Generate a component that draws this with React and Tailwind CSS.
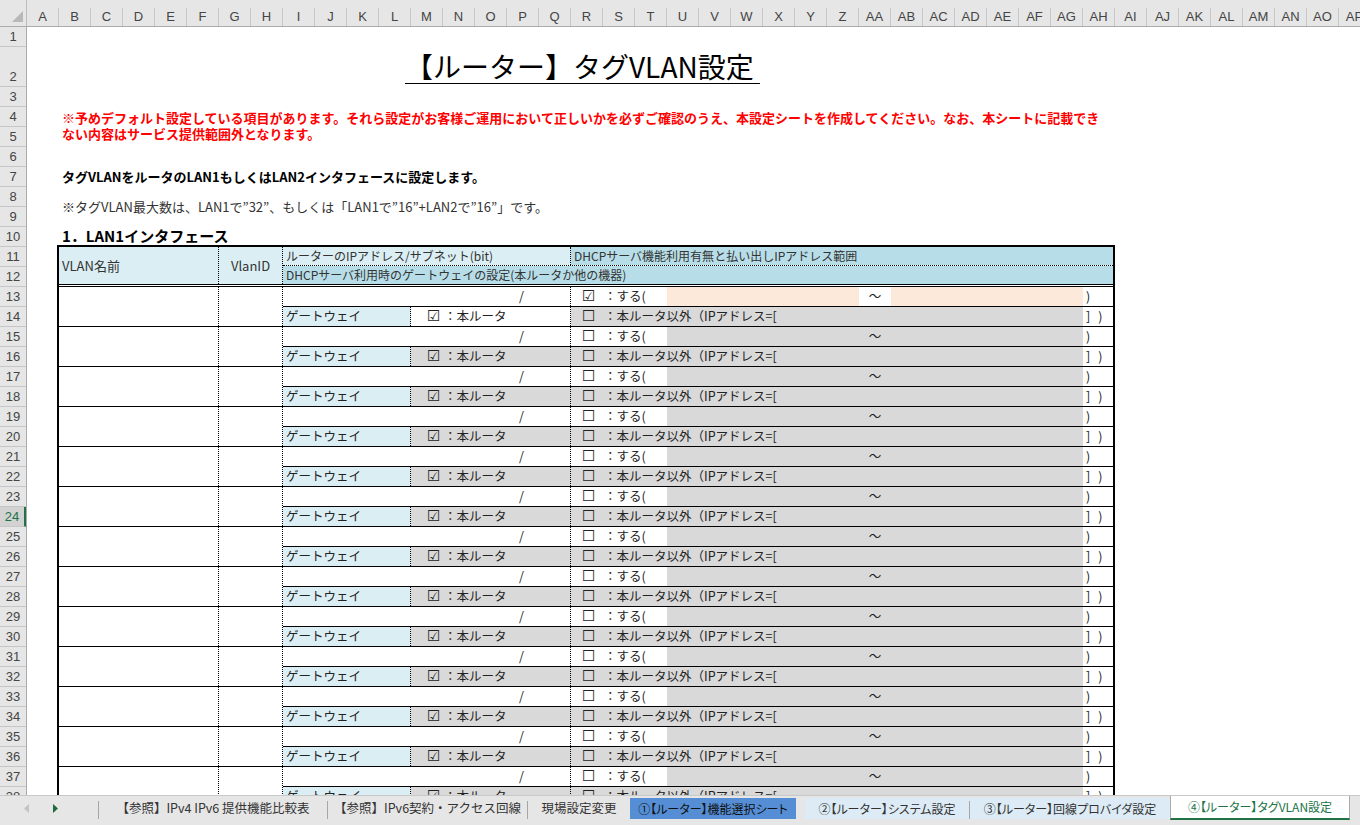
import React from 'react';

const jp = "font-['Noto_Sans_CJK_JP',sans-serif]";
const lat = "font-['Liberation_Sans','Noto_Sans_CJK_JP',sans-serif]";

const colName = (i) => {
  let s = '';
  let n = i + 1;
  while (n > 0) {
    const m = (n - 1) % 26;
    s = String.fromCharCode(65 + m) + s;
    n = Math.floor((n - 1) / 26);
  }
  return s;
};

const columns = Array.from({ length: 42 }, (_, i) => colName(i));
const rowNums = Array.from({ length: 38 }, (_, i) => i + 1);
const pairs = Array.from({ length: 13 }, (_, i) => i);

const Box = ({ checked, w = 'w-[22px]' }) => (
  <span className={`${w} shrink-0 font-['DejaVu_Sans',sans-serif] text-[15px] leading-none text-[#222]`}>
    {checked ? '☑' : '☐'}
  </span>
);

function Pair({ first }) {
  return (
    <div className="flex h-[40px] border-b border-black">
      <div className="w-[160px] border-r border-dotted border-black" />
      <div className="w-[64px] border-r border-dotted border-black" />
      <div className="flex-1 flex flex-col">
        <div className="h-[20px] flex border-b border-black">
          <div className="w-[288px] border-r border-dotted border-black flex items-center justify-end pr-[46px]">/</div>
          <div className="w-[96px] flex items-center pl-[11px]">
            <Box checked={first} />
            <span>：する(</span>
          </div>
          {first ? (
            <>
              <div className="w-[192px] bg-[#fde9d9]" />
              <div className="w-[32px] flex items-center justify-center">〜</div>
              <div className="w-[192px] bg-[#fde9d9]" />
            </>
          ) : (
            <div className="w-[416px] bg-[#d9d9d9] flex items-center justify-center">〜</div>
          )}
          <div className="flex-1 flex items-center pl-[3px]">)</div>
        </div>
        <div className="flex-1 flex">
          <div className="w-[128px] bg-[#daeef3] border-r border-dotted border-black flex items-center pl-[3px]">ゲートウェイ</div>
          <div className={`w-[160px] border-r border-dotted border-black flex items-center pl-[16px] ${first ? '' : 'bg-[#d9d9d9]'}`}>
            <Box checked w="w-[17px]" />
            <span>：本ルータ</span>
          </div>
          <div className="w-[512px] bg-[#d9d9d9] flex items-center pl-[11px]">
            <Box />
            <span>：本ルータ以外（IPアドレス=[</span>
          </div>
          <div className="flex-1 flex items-center pl-[3px]">
            <span>]</span>
            <span className="ml-[8px]">)</span>
          </div>
        </div>
      </div>
    </div>
  );
}

const Sep = () => <div className="w-px h-[18px] mt-[5px] bg-[#a6a6a6] shrink-0" />;

function TabBar() {
  return (
    <div className={`h-[30px] bg-[#e6e6e6] border-t border-[#c8c8c8] flex text-[12px] text-[#333] ${jp}`}>
      <div className="w-[98px] h-[24px] relative shrink-0">
        <svg className="absolute left-[24px] top-[8px]" width="6" height="9" viewBox="0 0 6 9">
          <polygon points="5,0 5,9 0,4.5" fill="#c4c4c4" />
        </svg>
        <svg className="absolute left-[53px] top-[8px]" width="6" height="9" viewBox="0 0 6 9">
          <polygon points="0,0 0,9 5,4.5" fill="#1e6b3c" />
        </svg>
      </div>
      <Sep />
      <div className="w-[228px] h-[24px] flex items-center justify-center whitespace-nowrap text-[12.5px]">【参照】IPv4 IPv6 提供機能比較表</div>
      <Sep />
      <div className="w-[199px] h-[24px] flex items-center justify-center whitespace-nowrap text-[12.5px]">【参照】IPv6契約・アクセス回線</div>
      <Sep />
      <div className="w-[102px] h-[24px] flex items-center justify-center whitespace-nowrap text-[12.5px]">現場設定変更</div>
      <div className="w-[166px] h-[21px] mt-[2px] bg-[#558ed5] flex items-center justify-center whitespace-nowrap text-[#111] [font-feature-settings:'palt']">①【ルーター】機能選択シート</div>
      <div className="w-[9px]" />
      <div className="w-[164px] h-[21px] mt-[2px] bg-[#dcebf5] flex items-center justify-center whitespace-nowrap [font-feature-settings:'palt']">②【ルーター】システム設定</div>
      <Sep />
      <div className="w-[200px] h-[21px] mt-[2px] bg-[#dcebf5] flex items-center justify-center whitespace-nowrap [font-feature-settings:'palt']">③【ルーター】回線プロバイダ設定</div>
      <div className="w-[180px] h-[24px] bg-white border-x border-[#ababab] border-b-2 border-b-[#217346] flex items-center justify-center whitespace-nowrap text-[#217346] [font-feature-settings:'palt']">④【ルーター】タグVLAN設定</div>
    </div>
  );
}

export default function App() {
  return (
    <div className={`w-[1360px] h-[825px] overflow-hidden bg-white ${jp}`}>
      {/* column header */}
      <div className={`h-[27px] bg-[#e6e6e6] flex items-end border-b border-[#ababab] ${lat}`}>
        <div className="w-[27px] h-[27px] relative shrink-0 border-r border-[#bdbdbd]">
          <svg className="absolute left-[12px] top-[12px]" width="12" height="12" viewBox="0 0 12 12">
            <polygon points="11,0 11,11 0,11" fill="#b8b8b8" />
          </svg>
        </div>
        {columns.map((c) => (
          <div key={c} className="w-[32px] h-[18px] shrink-0 border-r border-[#c6c6c6] flex items-center justify-center text-[13px] text-[#444]">
            {c}
          </div>
        ))}
      </div>

      <div className="h-[768px] overflow-hidden flex">
        {/* row header */}
        <div className={`w-[27px] shrink-0 bg-[#e6e6e6] border-r border-[#ababab] ${lat}`}>
          {rowNums.map((n) => (
            <div
              key={n}
              className={`${n === 2 ? 'h-[40px]' : 'h-[20px]'} border-b border-[#c6c6c6] flex items-end justify-center leading-[18px] text-[13px] ${
                n === 24 ? 'bg-[#d2d2d2] text-[#217346] border-r-2 border-r-[#217346]' : 'text-[#444]'
              }`}
            >
              {n}
            </div>
          ))}
        </div>

        {/* sheet */}
        <div className="flex-1 text-[12.5px] text-[#222]">
          <div className="h-[20px]" />
          <div className="h-[40px] flex items-end pl-[378px] pb-[4px]">
            <span className="text-[28px] leading-[34px] underline underline-offset-[5px] decoration-1 whitespace-pre text-black">【ルーター】タグVLAN設定 </span>
          </div>
          <div className="h-[20px]" />
          <div className="h-[40px] pl-[35px] pt-[3px] text-[13px] leading-[16px] font-bold text-[#ff0000] whitespace-nowrap">
            <div>※予めデフォルト設定している項目があります。それら設定がお客様ご運用において正しいかを必ずご確認のうえ、本設定シートを作成してください。なお、本シートに記載でき</div>
            <div>ない内容はサービス提供範囲外となります。</div>
          </div>
          <div className="h-[20px]" />
          <div className="h-[20px] flex items-center pl-[35px] text-[13px] font-bold text-black">タグVLANをルータのLAN1もしくはLAN2インタフェースに設定します。</div>
          <div className="h-[40px] flex items-center pl-[35px] text-[13px] text-[#333]">※タグVLAN最大数は、LAN1で”32”、もしくは「LAN1で”16”+LAN2で”16”」です。</div>
          <div className="h-[18px] flex items-center pl-[35px] text-[15px] font-bold text-black">1．LAN1インタフェース</div>

          {/* table */}
          <div className="ml-[30px] w-[1058px] border-x-2 border-t-2 border-black">
            <div className="h-[40px] flex border-b-[3px] border-double border-black text-[12px] text-[#333]">
              <div className="w-[160px] bg-[#daeef3] border-r border-dotted border-black flex items-center pl-[3px] text-[13px]">VLAN名前</div>
              <div className="w-[64px] bg-[#daeef3] border-r border-dotted border-black flex items-center justify-center text-[13px]">VlanID</div>
              <div className="flex-1 flex flex-col">
                <div className="h-[20px] flex border-b border-dotted border-black">
                  <div className="w-[288px] bg-[#daeef3] border-r border-dotted border-black flex items-center pl-[3px]">ルーターのIPアドレス/サブネット(bit)</div>
                  <div className="flex-1 bg-[#b7dee8] flex items-center pl-[3px]">DHCPサーバ機能利用有無と払い出しIPアドレス範囲</div>
                </div>
                <div className="flex-1 bg-[#b7dee8] flex items-center pl-[3px]">DHCPサーバ利用時のゲートウェイの設定(本ルータか他の機器)</div>
              </div>
            </div>
            {pairs.map((i) => (
              <Pair key={i} first={i === 0} />
            ))}
          </div>
        </div>
      </div>

      <TabBar />
    </div>
  );
}
